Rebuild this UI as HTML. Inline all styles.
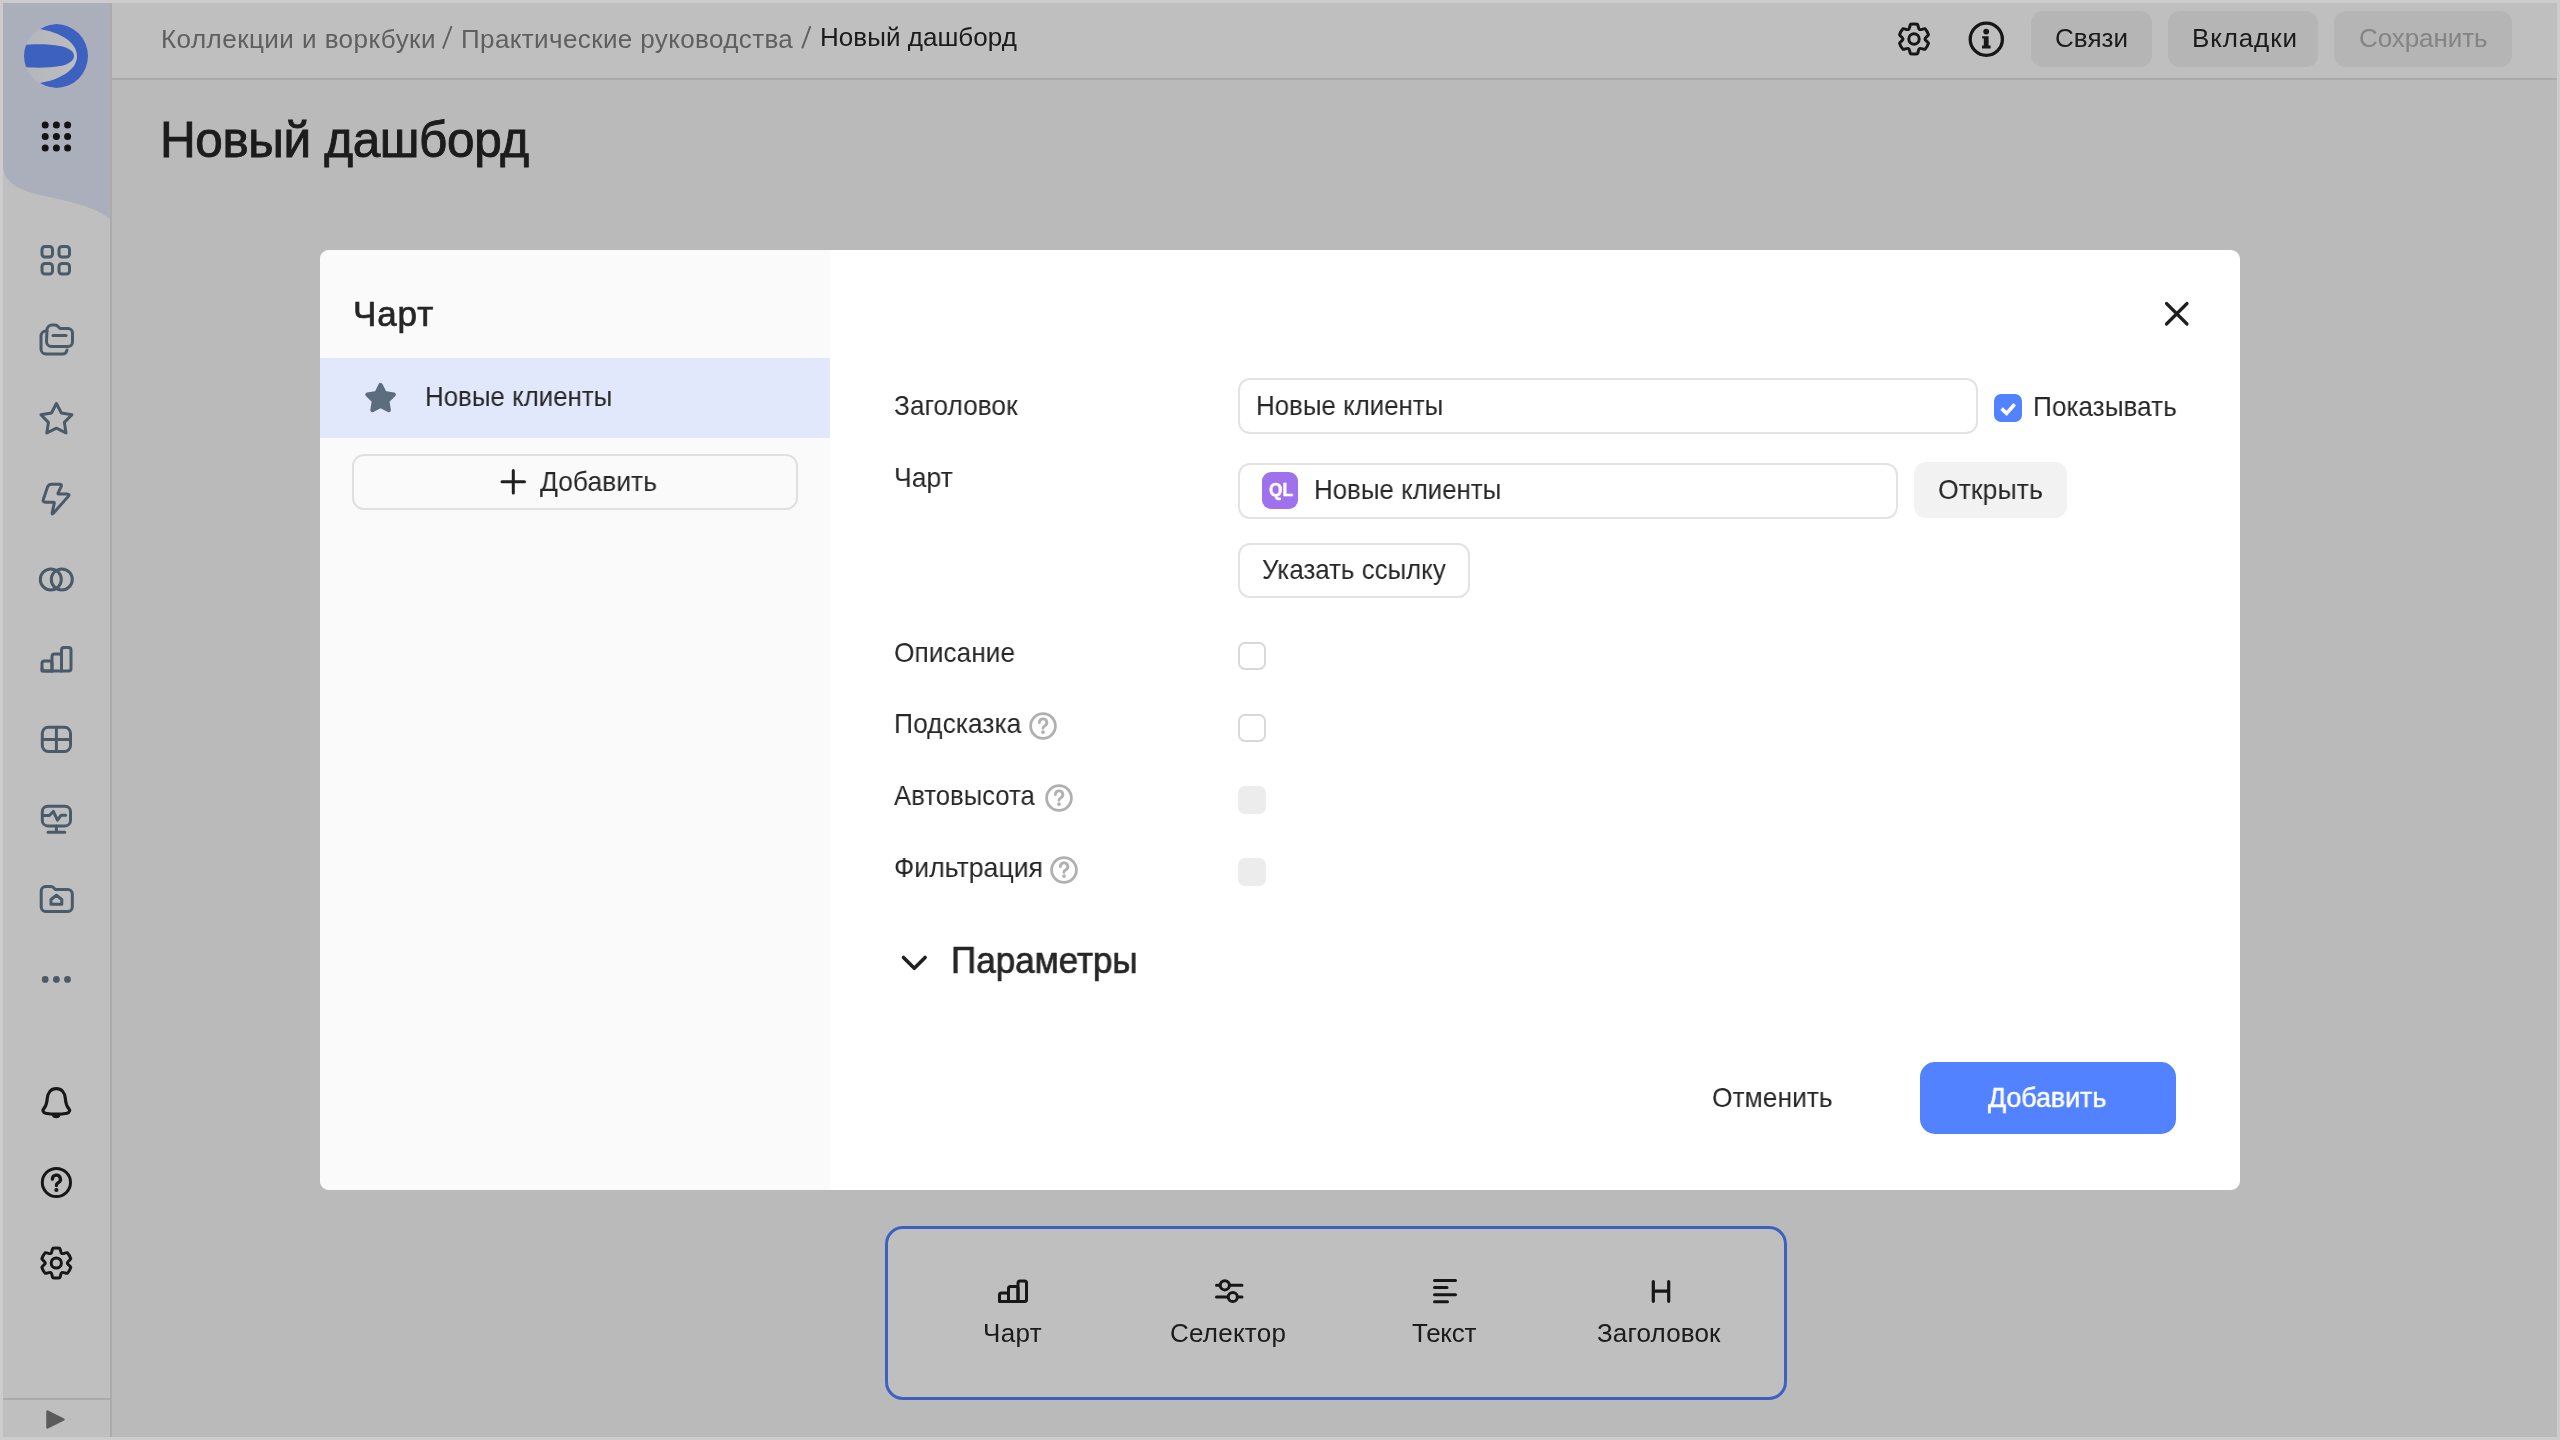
<!DOCTYPE html>
<html><head><meta charset="utf-8">
<style>
*{box-sizing:border-box;margin:0;padding:0}
html,body{width:2560px;height:1440px;overflow:hidden;background:#cccccc;font-family:"Liberation Sans",sans-serif;color:#262626}
.a{position:absolute}
.t{position:absolute;white-space:nowrap;line-height:1;will-change:transform}
.med{-webkit-text-stroke:0.5px currentColor}
</style></head><body>
<div class="a" style="left:3px;top:3px;width:2554px;height:1434px;background:#f9f9f9"></div>
<div class="a" style="left:3px;top:3px;width:109px;height:1434px;background:#fff;border-right:2px solid #e5e5e5"></div>
<svg class="a" style="left:0;top:0" width="112" height="240" viewBox="0 0 112 240"><path d="M3,3 H110 V219 C100,211 85,205 58,199 C30,193 3,188 3,165 Z" fill="#e4eafb"/></svg>
<div class="a" style="left:3px;top:1398px;width:107px;height:2px;background:#e5e5e5"></div>
<div class="a" style="left:112px;top:3px;width:2445px;height:77px;background:#fff;border-bottom:2px solid #e5e5e5"></div>
<svg class="a" style="left:24px;top:24px" width="64" height="64" viewBox="0 0 64 64">
<defs><linearGradient id="lg" x1="0" x2="1" y1="0" y2="0"><stop offset="0" stop-color="#f0f3fb"/><stop offset="1" stop-color="#ffffff"/></linearGradient>
<clipPath id="lc"><circle cx="32" cy="32" r="32"/></clipPath></defs>
<g clip-path="url(#lc)">
<rect width="64" height="64" fill="url(#lg)"/>
<path d="M16,5 A32,32 0 1 1 16,59 C34,56 53,47 53,32 C53,17 34,8 16,5 Z" fill="#5282ff"/>
<path d="M0,21 C10,20 26,20 36,22 C46,24 50,28 50,32 C50,36 46,40 36,42 C26,44 10,44 0,43 Z" fill="#5282ff"/>
</g></svg>
<svg class="a" style="left:0;top:0" width="112" height="200" viewBox="0 0 112 200" fill="#1a1a1a"><circle cx="45.2" cy="125" r="3.5"/><circle cx="56.4" cy="125" r="3.5"/><circle cx="67.6" cy="125" r="3.5"/><circle cx="45.2" cy="136.5" r="3.5"/><circle cx="56.4" cy="136.5" r="3.5"/><circle cx="67.6" cy="136.5" r="3.5"/><circle cx="45.2" cy="148" r="3.5"/><circle cx="56.4" cy="148" r="3.5"/><circle cx="67.6" cy="148" r="3.5"/></svg>
<svg class="a" style="left:0;top:236px" width="112" height="50" viewBox="0 236 112 50" fill="none" stroke="#62788c" stroke-width="3" stroke-linecap="round" stroke-linejoin="round"><rect x="42" y="246.5" width="10.5" height="10.5" rx="3"/><rect x="59" y="246.5" width="10.5" height="10.5" rx="3"/><rect x="42" y="263.5" width="10.5" height="10.5" rx="3"/><rect x="59" y="263.5" width="10.5" height="10.5" rx="3"/></svg>
<svg class="a" style="left:0;top:315px" width="112" height="50" viewBox="0 315 112 50" fill="none" stroke="#62788c" stroke-width="3" stroke-linecap="round" stroke-linejoin="round"><path d="M47,331 h-1 a5,5 0 0 0 -5,5 v13 a5,5 0 0 0 5,5 h16 a5,5 0 0 0 5,-4"/><path d="M47,330 a5,5 0 0 1 5,-5 h3 a4,4 0 0 1 3,1.5 l2,2 h8 a4.5,4.5 0 0 1 4.5,4.5 v9 a4.5,4.5 0 0 1 -4.5,4.5 h-16.5 a5,5 0 0 1 -5,-5 Z"/><path d="M53,335.5 h13"/></svg>
<svg class="a" style="left:0;top:395px" width="112" height="45" viewBox="0 395 112 45" fill="none" stroke="#62788c" stroke-width="3" stroke-linecap="round" stroke-linejoin="round"><path d="M56.40,403.50 L61.34,413.00 L71.90,414.76 L64.39,422.40 L65.98,432.99 L56.40,428.20 L46.82,432.99 L48.41,422.40 L40.90,414.76 L51.46,413.00Z"/></svg>
<svg class="a" style="left:0;top:475px" width="112" height="50" viewBox="0 475 112 50" fill="none" stroke="#62788c" stroke-width="3" stroke-linecap="round" stroke-linejoin="round"><path d="M51.50,484.20 L59.30,484.20 Q62.30,484.20 61.00,486.90 L58.03,493.10 Q57.60,494.00 58.60,494.00 L66.90,494.00 Q70.40,494.00 68.08,496.62 L53.59,512.96 Q51.60,515.20 52.25,512.27 L54.28,503.18 Q54.50,502.20 53.50,502.20 L45.40,502.20 Q42.40,502.20 43.36,499.36 L47.54,487.04 Q48.50,484.20 51.50,484.20 Z"/></svg>
<svg class="a" style="left:0;top:560px" width="112" height="40" viewBox="0 560 112 40" fill="none" stroke="#62788c" stroke-width="3" stroke-linecap="round" stroke-linejoin="round"><circle cx="50.8" cy="579.4" r="10.5"/><circle cx="61.8" cy="579.4" r="10.5"/></svg>
<svg class="a" style="left:0;top:640px" width="112" height="40" viewBox="0 640 112 40" fill="none" stroke="#62788c" stroke-width="3" stroke-linecap="round" stroke-linejoin="round"><path d="M42,671 V663.5 a2.5,2.5 0 0 1 2.5,-2.5 H49.5 a2.5,2.5 0 0 1 2.5,2.5 V671 Z"/><path d="M52,671 V656.5 a2.5,2.5 0 0 1 2.5,-2.5 H59 a2.5,2.5 0 0 1 2.5,2.5 V671"/><path d="M61.5,671 V650 a2.5,2.5 0 0 1 2.5,-2.5 H68.5 a2.5,2.5 0 0 1 2.5,2.5 V668.5 a2.5,2.5 0 0 1 -2.5,2.5 H44.5 a2.5,2.5 0 0 1 -2.5,-2.5"/></svg>
<svg class="a" style="left:0;top:720px" width="112" height="40" viewBox="0 720 112 40" fill="none" stroke="#62788c" stroke-width="3" stroke-linecap="round" stroke-linejoin="round"><rect x="42.3" y="727.3" width="28.2" height="24.2" rx="6"/><path d="M56.4,727.3 V751.5 M42.3,739.4 H70.5"/></svg>
<svg class="a" style="left:0;top:800px" width="112" height="40" viewBox="0 800 112 40" fill="none" stroke="#62788c" stroke-width="3" stroke-linecap="round" stroke-linejoin="round"><rect x="42.3" y="806.3" width="28.2" height="19.6" rx="5.5"/><path d="M42.5,815.6 H49.4 L53.3,811.4 L57.5,820.1 L61.1,815.2 H65.6"/><path d="M56.4,826 V832 M48,832.3 H64.8"/></svg>
<svg class="a" style="left:0;top:875px" width="112" height="45" viewBox="0 875 112 45" fill="none" stroke="#62788c" stroke-width="3" stroke-linecap="round" stroke-linejoin="round"><path d="M41.2,891 a4.5,4.5 0 0 1 4.5,-4.5 h5 a4,4 0 0 1 3,1.3 l1.6,1.7 h12.5 a4.5,4.5 0 0 1 4.5,4.5 v13 a4.5,4.5 0 0 1 -4.5,4.5 h-22.1 a4.5,4.5 0 0 1 -4.5,-4.5 Z"/><path d="M51,904.3 V899.5 L56.4,895.3 L61.8,899.5 V904.3 Z"/></svg>
<svg class="a" style="left:0;top:970px" width="112" height="20" viewBox="0 970 112 20" fill="#62788c"><circle cx="45.2" cy="979.4" r="3.4"/><circle cx="56.4" cy="979.4" r="3.4"/><circle cx="67.5" cy="979.4" r="3.4"/></svg>
<svg class="a" style="left:0;top:1080px" width="112" height="45" viewBox="0 1080 112 45" fill="none" stroke="#1f1f1f" stroke-width="3.2" stroke-linecap="round" stroke-linejoin="round"><g transform="translate(0,-0.9)"><path d="M56.3,1089.6 c-5.5,0 -8.5,4.2 -9,9.4 c-0.4,5 -1.2,8 -3.5,10.5 c-1.5,1.6 -0.6,4.2 1.6,4.6 c3.6,0.7 7.2,1 10.9,1 c3.7,0 7.3,-0.3 10.9,-1 c2.2,-0.4 3.1,-3 1.6,-4.6 c-2.3,-2.5 -3.1,-5.5 -3.5,-10.5 c-0.5,-5.2 -3.5,-9.4 -9,-9.4 Z"/><path d="M52,1115 H60.6 L59.2,1118 Q56.3,1119.6 53.4,1118 Z" fill="#1f1f1f" stroke-width="1"/></g></svg>
<svg class="a" style="left:0;top:1160px" width="112" height="45" viewBox="0 1160 112 45" fill="none" stroke="#1f1f1f" stroke-width="3" stroke-linecap="round" stroke-linejoin="round"><circle cx="56.4" cy="1182.5" r="14.1"/><path d="M52.4,1179.2 a4,4 0 1 1 5.7,3.6 c-1.2,0.6 -1.7,1.4 -1.7,2.7" stroke-width="3.3"/><circle cx="56.4" cy="1190" r="2.1" fill="#1f1f1f" stroke="none"/></svg>
<svg class="a" style="left:0;top:1240px" width="112" height="50" viewBox="0 1240 112 50" fill="none" stroke="#1f1f1f" stroke-width="3" stroke-linecap="round" stroke-linejoin="round"><path d="M52.90,1248.29 A15.1,15.1 0 0 1 59.70,1248.29 C60.73,1249.20 60.42,1252.80 61.80,1253.47 C63.07,1254.33 66.04,1252.26 67.34,1252.70 A15.1,15.1 0 0 1 70.74,1258.59 C70.47,1259.94 67.19,1261.47 67.30,1263.00 C67.19,1264.53 70.47,1266.06 70.74,1267.41 A15.1,15.1 0 0 1 67.34,1273.30 C66.04,1273.74 63.07,1271.67 61.80,1272.53 C60.42,1273.20 60.73,1276.80 59.70,1277.71 A15.1,15.1 0 0 1 52.90,1277.71 C51.87,1276.80 52.18,1273.20 50.80,1272.53 C49.53,1271.67 46.56,1273.74 45.26,1273.30 A15.1,15.1 0 0 1 41.86,1267.41 C42.13,1266.06 45.41,1264.53 45.30,1263.00 C45.41,1261.47 42.13,1259.94 41.86,1258.59 A15.1,15.1 0 0 1 45.26,1252.70 C46.56,1252.26 49.53,1254.33 50.80,1253.47 C52.18,1252.80 51.87,1249.20 52.90,1248.29 Z"/><circle cx="56.3" cy="1263" r="5.1"/></svg>
<svg class="a" style="left:40px;top:1405px" width="30" height="30" viewBox="40 1405 30 30"><path d="M47.5,1411.5 L63.5,1419.5 L47.5,1427.5 Z" fill="#7a7a7a" stroke="#7a7a7a" stroke-width="2.5" stroke-linejoin="round"/></svg>
<div class="t" style="left:161px;top:25.69px;font-size:26px;letter-spacing:0.46px;color:#7f7f7f;">Коллекции и воркбуки</div>
<svg class="a" style="left:430px;top:15px" width="400" height="45" viewBox="430 15 400 45" stroke="#7f7f7f" stroke-width="1.9" stroke-linecap="butt"><path d="M443,48.6 L451.6,26"/><path d="M802.2,48.4 L810.4,26.2"/></svg>
<div class="t" style="left:460.5px;top:25.69px;font-size:26px;letter-spacing:0.38px;color:#7f7f7f;">Практические руководства</div>
<div class="t" style="left:820px;top:23.69px;font-size:26px;letter-spacing:0.04px;color:#262626;">Новый дашборд</div>
<svg class="a" style="left:1890px;top:15px" width="48" height="48" viewBox="1890 15 48 48" fill="none" stroke="#1f1f1f" stroke-width="3" stroke-linejoin="round"><path d="M1910.60,24.29 A15.1,15.1 0 0 1 1917.40,24.29 C1918.43,25.20 1918.12,28.80 1919.50,29.47 C1920.77,30.33 1923.74,28.26 1925.04,28.70 A15.1,15.1 0 0 1 1928.44,34.59 C1928.17,35.94 1924.89,37.47 1925.00,39.00 C1924.89,40.53 1928.17,42.06 1928.44,43.41 A15.1,15.1 0 0 1 1925.04,49.30 C1923.74,49.74 1920.77,47.67 1919.50,48.53 C1918.12,49.20 1918.43,52.80 1917.40,53.71 A15.1,15.1 0 0 1 1910.60,53.71 C1909.57,52.80 1909.88,49.20 1908.50,48.53 C1907.23,47.67 1904.26,49.74 1902.96,49.30 A15.1,15.1 0 0 1 1899.56,43.41 C1899.83,42.06 1903.11,40.53 1903.00,39.00 C1903.11,37.47 1899.83,35.94 1899.56,34.59 A15.1,15.1 0 0 1 1902.96,28.70 C1904.26,28.26 1907.23,30.33 1908.50,29.47 C1909.88,28.80 1909.57,25.20 1910.60,24.29 Z"/><circle cx="1914" cy="39" r="5.2"/></svg>
<svg class="a" style="left:1962px;top:15px" width="48" height="48" viewBox="1962 15 48 48" fill="#1f1f1f"><circle cx="1986.3" cy="39.3" r="16.1" fill="none" stroke="#1f1f1f" stroke-width="3.3"/><circle cx="1986.2" cy="31.6" r="2.9"/><path d="M1982.2,36.3 H1988.6 V45.6 H1990.6 V48.6 H1982 V45.6 H1983.8 V38.6 H1982.2 Z"/></svg>
<div class="a" style="left:2031px;top:11px;width:121px;height:56px;border-radius:12px;background:#f2f2f2"></div>
<div class="t" style="left:2055px;top:25.39px;font-size:26px;letter-spacing:0.05px;color:#262626;">Связи</div>
<div class="a" style="left:2168px;top:11px;width:150px;height:56px;border-radius:12px;background:#f2f2f2"></div>
<div class="t" style="left:2191.5px;top:25.39px;font-size:26px;letter-spacing:0.87px;color:#262626;">Вкладки</div>
<div class="a" style="left:2334px;top:11px;width:178px;height:56px;border-radius:12px;background:#f2f2f2"></div>
<div class="t" style="left:2358.5px;top:25.39px;font-size:26px;letter-spacing:-0.08px;color:#b0b0b0;">Сохранить</div>
<div class="t" style="left:160px;top:115.40px;font-size:49.5px;letter-spacing:-0.4px;color:#262626;-webkit-text-stroke:0.9px #262626;">Новый дашборд</div>
<div class="a" style="left:885px;top:1226px;width:902px;height:174px;background:#fff;border:3px solid #5282ff;border-radius:18px"></div>
<svg class="a" style="left:990px;top:1272px" width="46" height="40" viewBox="990 1272 46 40" fill="none" stroke="#1f1f1f" stroke-width="3" stroke-linejoin="round"><path d="M999.5,1301.5 V1295 a2,2 0 0 1 2,-2 H1006.5 a2,2 0 0 1 2,2 V1301.5 Z"/><path d="M1008.5,1301.5 V1288.5 a2,2 0 0 1 2,-2 H1016 a2,2 0 0 1 2,2 V1301.5"/><path d="M1018,1301.5 V1283 a2,2 0 0 1 2,-2 H1024.5 a2,2 0 0 1 2,2 V1299.5 a2,2 0 0 1 -2,2 H1001.5 a2,2 0 0 1 -2,-2"/></svg>
<svg class="a" style="left:1205px;top:1272px" width="46" height="40" viewBox="1205 1272 46 40" fill="none" stroke="#1f1f1f" stroke-width="3" stroke-linecap="round"><path d="M1216.5,1285.3 H1219.8 M1229.8,1285.3 H1242"/><circle cx="1224.8" cy="1285.3" r="4.6"/><path d="M1216.5,1297 H1227.8 M1237.8,1297 H1242"/><circle cx="1232.8" cy="1297" r="4.6"/></svg>
<svg class="a" style="left:1420px;top:1272px" width="46" height="40" viewBox="1420 1272 46 40" fill="none" stroke="#1f1f1f" stroke-width="3" stroke-linecap="round"><path d="M1434.5,1280.6 H1455.5 M1434.5,1287.6 H1447 M1434.5,1294.8 H1455.5 M1434.5,1301.8 H1447.5"/></svg>
<svg class="a" style="left:1640px;top:1272px" width="46" height="40" viewBox="1640 1272 46 40" fill="none" stroke="#1f1f1f" stroke-width="3.2" stroke-linecap="round"><path d="M1653.3,1281.6 V1301.3 M1668.7,1281.6 V1301.3 M1653.3,1291.2 H1668.7"/></svg>
<div class="t" style="left:983px;top:1319.99px;font-size:26px;letter-spacing:0.39px;color:#262626;">Чарт</div>
<div class="t" style="left:1170px;top:1319.99px;font-size:26px;letter-spacing:0.24px;color:#262626;">Селектор</div>
<div class="t" style="left:1411.5px;top:1319.99px;font-size:26px;letter-spacing:-0.29px;color:#262626;">Текст</div>
<div class="t" style="left:1597px;top:1319.99px;font-size:26px;letter-spacing:0.15px;color:#262626;">Заголовок</div>
<div class="a" style="left:0;top:0;width:2560px;height:1440px;background:rgba(0,0,0,0.25)"></div>
<div class="a" style="left:0;top:0;width:2560px;height:1440px;border:3px solid #cccccc"></div>
<div class="a" style="left:320px;top:250px;width:1920px;height:940px;background:#fff;border-radius:9px;overflow:hidden"><div class="a" style="left:0;top:0;width:510px;height:940px;background:#fafafa"></div><div class="a" style="left:0;top:108px;width:510px;height:80px;background:#e1e8fb"></div></div>
<div class="t" style="left:352.5px;top:295.67px;font-size:35px;letter-spacing:0.9px;color:#262626;-webkit-text-stroke:0.7px #262626;">Чарт</div>
<svg class="a" style="left:360px;top:376px" width="42" height="42" viewBox="360 376 42 42"><path d="M380.60,385.00 L384.77,393.16 L393.82,394.60 L387.35,401.09 L388.77,410.15 L380.60,406.00 L372.43,410.15 L373.85,401.09 L367.38,394.60 L376.43,393.16Z" fill="#5b6d7f" stroke="#5b6d7f" stroke-width="4.2" stroke-linejoin="round"/></svg>
<div class="t" style="left:424.5px;top:383.10px;font-size:28px;letter-spacing:0px;color:#262626;transform:scaleX(0.924);transform-origin:0 0;">Новые клиенты</div>
<div class="a" style="left:352px;top:454px;width:446px;height:56px;border:2px solid #e0e0e0;border-radius:12px"></div>
<svg class="a" style="left:495px;top:463px" width="36" height="36" viewBox="495 463 36 36" stroke="#1f1f1f" stroke-width="3" stroke-linecap="round"><path d="M513.3,470.5 V493 M502,481.7 H524.5"/></svg>
<div class="t" style="left:539.5px;top:467.70px;font-size:28px;letter-spacing:0px;color:#262626;transform:scaleX(0.945);transform-origin:0 0;">Добавить</div>
<svg class="a" style="left:2155px;top:292px" width="44" height="44" viewBox="2155 292 44 44" stroke="#1f1f1f" stroke-width="3.2" stroke-linecap="round"><path d="M2166.5,303.5 L2187,324 M2187,303.5 L2166.5,324"/></svg>
<div class="t" style="left:894px;top:391.60px;font-size:28px;letter-spacing:0px;color:#262626;transform:scaleX(0.938);transform-origin:0 0;">Заголовок</div>
<div class="t" style="left:894px;top:463.50px;font-size:28px;letter-spacing:0px;color:#262626;transform:scaleX(0.947);transform-origin:0 0;">Чарт</div>
<div class="t" style="left:894px;top:639.40px;font-size:28px;letter-spacing:0px;color:#262626;transform:scaleX(0.94);transform-origin:0 0;">Описание</div>
<div class="t" style="left:894px;top:710.10px;font-size:28px;letter-spacing:0px;color:#262626;transform:scaleX(0.944);transform-origin:0 0;">Подсказка</div>
<div class="t" style="left:894px;top:782.10px;font-size:28px;letter-spacing:0px;color:#262626;transform:scaleX(0.918);transform-origin:0 0;">Автовысота</div>
<div class="t" style="left:894px;top:854.10px;font-size:28px;letter-spacing:0px;color:#262626;transform:scaleX(0.952);transform-origin:0 0;">Фильтрация</div>
<svg class="a" style="left:1027px;top:710.3px" width="32" height="32" viewBox="1027 710.3 32 32" fill="none" stroke="#b0b0b0" stroke-width="2.8" stroke-linecap="round"><circle cx="1043" cy="726.3" r="12.4"/><path d="M1039.4,722.9 a3.7,3.7 0 1 1 5.2,3.3 c-1,0.5 -1.7,1.2 -1.7,2.4"/><circle cx="1043" cy="732.4" r="1.9" fill="#b0b0b0" stroke="none"/></svg>
<svg class="a" style="left:1043px;top:782.3px" width="32" height="32" viewBox="1043 782.3 32 32" fill="none" stroke="#b0b0b0" stroke-width="2.8" stroke-linecap="round"><circle cx="1059" cy="798.3" r="12.4"/><path d="M1055.4,794.9 a3.7,3.7 0 1 1 5.2,3.3 c-1,0.5 -1.7,1.2 -1.7,2.4"/><circle cx="1059" cy="804.4" r="1.9" fill="#b0b0b0" stroke="none"/></svg>
<svg class="a" style="left:1048px;top:854.3px" width="32" height="32" viewBox="1048 854.3 32 32" fill="none" stroke="#b0b0b0" stroke-width="2.8" stroke-linecap="round"><circle cx="1064" cy="870.3" r="12.4"/><path d="M1060.4,866.9 a3.7,3.7 0 1 1 5.2,3.3 c-1,0.5 -1.7,1.2 -1.7,2.4"/><circle cx="1064" cy="876.4" r="1.9" fill="#b0b0b0" stroke="none"/></svg>
<div class="a" style="left:1238px;top:642px;width:28px;height:28px;border-radius:7px;border:2px solid #d9d9d9;background:#fff"></div>
<div class="a" style="left:1238px;top:714px;width:28px;height:28px;border-radius:7px;border:2px solid #d9d9d9;background:#fff"></div>
<div class="a" style="left:1238px;top:786px;width:28px;height:28px;border-radius:7px;background:#ececec"></div>
<div class="a" style="left:1238px;top:858px;width:28px;height:28px;border-radius:7px;background:#ececec"></div>
<div class="a" style="left:1238px;top:378px;width:740px;height:56px;border:2px solid #e3e3e3;border-radius:12px;background:#fff"></div>
<div class="t" style="left:1255.5px;top:391.80px;font-size:28px;letter-spacing:0px;color:#262626;transform:scaleX(0.924);transform-origin:0 0;">Новые клиенты</div>
<div class="a" style="left:1994px;top:394px;width:28px;height:28px;border-radius:7px;background:#5282ff"></div>
<svg class="a" style="left:1994px;top:394px" width="28" height="28" viewBox="1994 394 28 28" fill="none" stroke="#fff" stroke-width="3.6"><path d="M2001.6,408.6 L2006.6,413.4 L2014.7,404.2"/></svg>
<div class="t" style="left:2032.5px;top:393.35px;font-size:28px;letter-spacing:0px;color:#262626;transform:scaleX(0.935);transform-origin:0 0;">Показывать</div>
<div class="a" style="left:1238px;top:463px;width:660px;height:56px;border:2px solid #e3e3e3;border-radius:12px;background:#fff"></div>
<div class="a" style="left:1262px;top:472px;width:36px;height:37px;border-radius:9px;background:#9f71ec"></div>
<div class="t" style="left:1268.6px;top:480.54px;font-size:18.5px;letter-spacing:0px;color:#fff;font-weight:bold;-webkit-text-stroke:0.5px #fff;transform:scaleX(0.93);transform-origin:0 0;">QL</div>
<div class="t" style="left:1314px;top:476.10px;font-size:28px;letter-spacing:0px;color:#262626;transform:scaleX(0.924);transform-origin:0 0;">Новые клиенты</div>
<div class="a" style="left:1914px;top:462px;width:153px;height:56px;border-radius:12px;background:#f2f2f2"></div>
<div class="t" style="left:1938px;top:475.85px;font-size:28px;letter-spacing:0px;color:#262626;transform:scaleX(0.953);transform-origin:0 0;">Открыть</div>
<div class="a" style="left:1238px;top:543px;width:232px;height:55px;border:2px solid #e3e3e3;border-radius:12px;background:#fff"></div>
<div class="t" style="left:1262px;top:556.10px;font-size:28px;letter-spacing:0px;color:#262626;transform:scaleX(0.925);transform-origin:0 0;">Указать ссылку</div>
<svg class="a" style="left:895px;top:948px" width="40" height="30" viewBox="895 948 40 30" fill="none" stroke="#1f1f1f" stroke-width="3.6" stroke-linecap="round" stroke-linejoin="round"><path d="M903.5,957.5 L914.3,968.3 L925.1,957.5"/></svg>
<div class="t" style="left:950.5px;top:943.13px;font-size:36px;letter-spacing:0px;color:#262626;-webkit-text-stroke:0.7px #262626;transform:scaleX(0.972);transform-origin:0 0;">Параметры</div>
<div class="t" style="left:1711.5px;top:1084.10px;font-size:28px;letter-spacing:0px;color:#262626;transform:scaleX(0.943);transform-origin:0 0;">Отменить</div>
<div class="a" style="left:1920px;top:1062px;width:256px;height:72px;border-radius:15px;background:#5282ff"></div>
<div class="t med" style="left:1988px;top:1084.10px;font-size:28px;letter-spacing:0px;color:#ffffff;transform:scaleX(0.956);transform-origin:0 0;">Добавить</div>
</body></html>
